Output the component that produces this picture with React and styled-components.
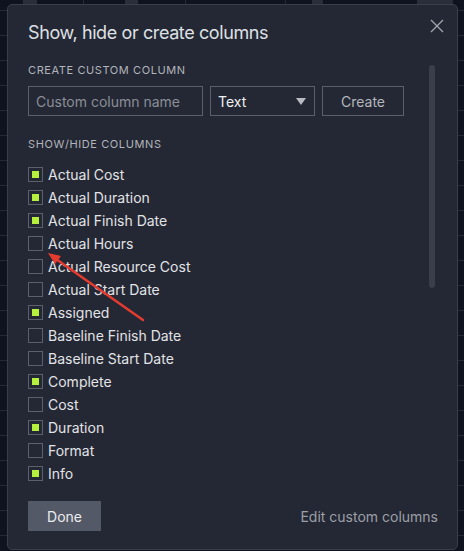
import React from "react";
import styled, { createGlobalStyle } from "styled-components";

const GlobalStyle = createGlobalStyle`
  html, body { margin: 0; padding: 0; background: #0f1320; }
  body { font-family: Inter, "Noto Sans", "Liberation Sans", sans-serif; }
  * { box-sizing: border-box; }
`;

const Page = styled.div`
  position: relative;
  width: 464px;
  height: 551px;
  overflow: hidden;
  background: #0f1320;
`;

const BgHeader = styled.div`
  display: flex;
  height: 11px;
  border-bottom: 1px solid #252936;
`;

const BgCell = styled.div`
  flex: 0 0 ${(p) => p.$w}px;
  background: ${(p) => (p.$light ? "#2a2e3a" : "transparent")};
  border-left: ${(p) => (p.$line ? "1px solid #252936" : "none")};
  color: #d8dae0;
  font-size: 12px;
  line-height: 12px;
  overflow: hidden;
  white-space: nowrap;
`;

const BgText = styled.div`
  margin-top: -10px;
  padding-left: 6px;
`;

const BgRow = styled.div`
  height: 25px;
  border-bottom: 1px solid #252936;
`;

const Modal = styled.div`
  position: absolute;
  left: 7px;
  top: 4px;
  width: 451px;
  height: 546px;
  background: #242834;
  border: 1px solid #3a3e4a;
  border-radius: 5px;
  display: flex;
  flex-direction: column;
`;

const Header = styled.div`
  display: flex;
  justify-content: space-between;
  align-items: flex-start;
  padding: 16px 13px 0 20px;
`;

const Title = styled.h2`
  margin: 0;
  font-size: 18px;
  line-height: 24px;
  font-weight: 400;
  letter-spacing: -0.4px;
  color: #dfe0e4;
`;

const CloseButton = styled.button`
  width: 14px;
  height: 14px;
  padding: 0;
  margin-top: -2px;
  border: none;
  background: transparent;
  display: flex;
  cursor: pointer;
`;

const ScrollArea = styled.div`
  margin-top: 17px;
  margin-right: 22px;
  height: 425px;
  display: flex;
`;

const ScrollContent = styled.div`
  flex: 1;
  min-width: 0;
  overflow: hidden;
  padding-left: 20px;
`;

const Track = styled.div`
  flex: 0 0 6px;
  padding-top: 3px;
`;

const Thumb = styled.div`
  height: 223px;
  border-radius: 3px;
  background: #3a3e4b;
`;

const SectionLabel = styled.div`
  font-size: 11px;
  line-height: 16px;
  letter-spacing: 0.6px;
  text-transform: uppercase;
  color: #b1b4bb;
  margin-top: ${(p) => p.$top || 0}px;
`;

const CreateRow = styled.div`
  display: flex;
  gap: 7px;
  margin-top: 8px;
`;

const TextInput = styled.input`
  width: 175px;
  height: 30px;
  background: transparent;
  border: 1px solid #5b5f6a;
  border-radius: 0;
  padding: 0 7px;
  font-family: inherit;
  font-size: 14px;
  color: #e4e5e8;
  outline: none;
  &::placeholder { color: #8b8e98; }
`;

const Select = styled.div`
  width: 105px;
  height: 30px;
  border: 1px solid #5b5f6a;
  display: flex;
  align-items: center;
  justify-content: space-between;
  padding: 0 8px 0 7px;
  font-size: 14px;
  color: #f0f1f3;
`;

const Caret = styled.span`
  width: 0;
  height: 0;
  border-left: 5px solid transparent;
  border-right: 5px solid transparent;
  border-top: 7px solid #b8bbc2;
`;

const OutlineButton = styled.button`
  width: 82px;
  height: 30px;
  background: transparent;
  border: 1px solid #5b5f6a;
  border-radius: 0;
  font-family: inherit;
  font-size: 14px;
  color: #b3b6bd;
  padding: 0;
`;

const List = styled.div`
  margin-top: 11px;
  display: flex;
  flex-direction: column;
`;

const Item = styled.label`
  display: flex;
  align-items: center;
  gap: 5px;
  height: 23px;
  flex: 0 0 23px;
  font-size: 14px;
  color: #e2e3e6;
`;

const Box = styled.span`
  width: 15px;
  height: 15px;
  border: 1px solid #5c606b;
  padding: 3px;
  display: flex;
  flex: 0 0 auto;
`;

const Fill = styled.span`
  flex: 1;
  background: #b4f03c;
`;

const Footer = styled.div`
  display: flex;
  justify-content: space-between;
  align-items: center;
  padding: 14px 19px 18px 20px;
`;

const DoneButton = styled.button`
  width: 73px;
  height: 30px;
  border: none;
  border-radius: 1px;
  background: #535967;
  color: #ececef;
  font-family: inherit;
  font-size: 14px;
  padding: 0;
`;

const TextLink = styled.span`
  font-size: 14px;
  color: #9c9fa7;
`;

const Annotation = styled.svg`
  position: absolute;
  left: 0;
  top: 0;
  pointer-events: none;
`;

const columns = [
  ["Actual Cost", true],
  ["Actual Duration", true],
  ["Actual Finish Date", true],
  ["Actual Hours", false],
  ["Actual Resource Cost", false],
  ["Actual Start Date", false],
  ["Assigned", true],
  ["Baseline Finish Date", false],
  ["Baseline Start Date", false],
  ["Complete", true],
  ["Cost", false],
  ["Duration", true],
  ["Format", false],
  ["Info", true],
  ["Late End", false],
  ["Late Start", false],
  ["Manually Scheduled", false],
  ["Milestone", false],
  ["Name", true],
  ["Notes", false],
];

const headerCells = [
  { w: 23 },
  { w: 14, light: true },
  { w: 46 },
  { w: 42, line: true },
  { w: 13, light: true },
  { w: 47 },
  { w: 100, line: true, text: "15 De" },
  { w: 27, line: true },
  { w: 10, light: true },
  { w: 95, line: true },
  { w: 36, light: true },
  { w: 11 },
];

export default function App() {
  return (
    <>
      <GlobalStyle />
      <Page>
        <BgHeader>
          {headerCells.map((c, i) => (
            <BgCell key={i} $w={c.w} $light={c.light} $line={c.line}>
              {c.text && <BgText>{c.text}</BgText>}
            </BgCell>
          ))}
        </BgHeader>
        {Array.from({ length: 22 }).map((_, i) => (
          <BgRow key={i} />
        ))}

        <Modal>
          <Header>
            <Title>Show, hide or create columns</Title>
            <CloseButton aria-label="Close">
              <svg width="14" height="14" viewBox="0 0 14 14">
                <path d="M1 1 L13 13 M13 1 L1 13" stroke="#a3a6ae" strokeWidth="1.3" fill="none" />
              </svg>
            </CloseButton>
          </Header>

          <ScrollArea>
            <ScrollContent>
              <SectionLabel>Create custom column</SectionLabel>
              <CreateRow>
                <TextInput placeholder="Custom column name" />
                <Select>
                  <span>Text</span>
                  <Caret />
                </Select>
                <OutlineButton>Create</OutlineButton>
              </CreateRow>
              <SectionLabel $top={20}>Show/hide columns</SectionLabel>
              <List>
                {columns.map(([name, on]) => (
                  <Item key={name}>
                    <Box>{on && <Fill />}</Box>
                    {name}
                  </Item>
                ))}
              </List>
            </ScrollContent>
            <Track>
              <Thumb />
            </Track>
          </ScrollArea>

          <Footer>
            <DoneButton>Done</DoneButton>
            <TextLink>Edit custom columns</TextLink>
          </Footer>
        </Modal>

        <Annotation width="464" height="551" viewBox="0 0 464 551">
          <line x1="143" y1="320" x2="56" y2="259" stroke="#e53b2f" strokeWidth="2.5" strokeLinecap="round" />
          <polygon points="48,253 61,256 55,264" fill="#e53b2f" />
        </Annotation>
      </Page>
    </>
  );
}
